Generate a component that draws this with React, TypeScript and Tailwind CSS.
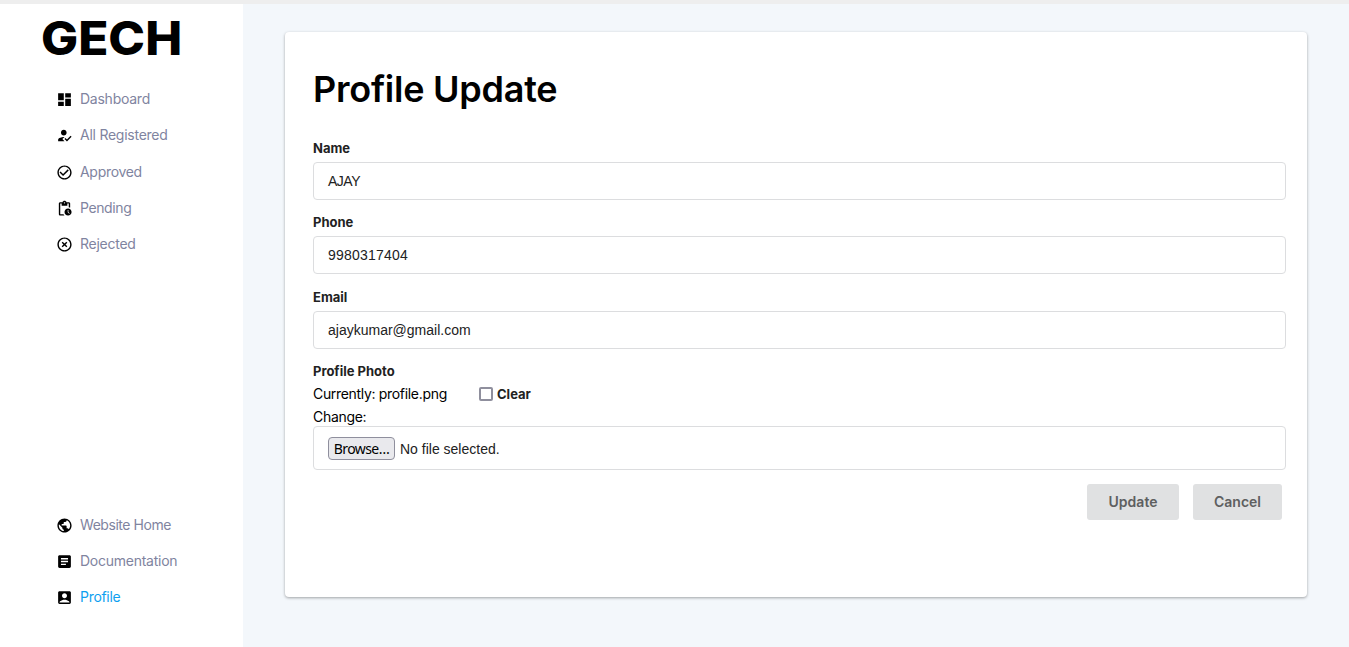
import React from "react";
import type { IconType } from "react-icons";
import {
  MdDashboard,
  MdHowToReg,
  MdCheckCircleOutline,
  MdPendingActions,
  MdHighlightOff,
  MdPublic,
  MdArticle,
  MdAccountBox,
} from "react-icons/md";

interface NavItem {
  label: string;
  icon: IconType;
  text: string;
}

const mainNav: NavItem[] = [
  { label: "Dashboard", icon: MdDashboard, text: "text-[#7f84a0] tracking-[-0.25px]" },
  { label: "All Registered", icon: MdHowToReg, text: "text-[#7f84a0] tracking-[-0.25px]" },
  { label: "Approved", icon: MdCheckCircleOutline, text: "text-[#7f84a0] tracking-[-0.3px]" },
  { label: "Pending", icon: MdPendingActions, text: "text-[#7f84a0] tracking-[-0.4px]" },
  { label: "Rejected", icon: MdHighlightOff, text: "text-[#7f84a0] tracking-[-0.25px]" },
];

const footNav: NavItem[] = [
  { label: "Website Home", icon: MdPublic, text: "text-[#7f84a0] tracking-[-0.45px]" },
  { label: "Documentation", icon: MdArticle, text: "text-[#7f84a0] tracking-[-0.25px]" },
  { label: "Profile", icon: MdAccountBox, text: "text-[#0d9ff0] tracking-[-0.3px]" },
];

function NavList({ items }: { items: NavItem[] }) {
  return (
    <ul className="flex flex-col pl-[56px]">
      {items.map(({ label, icon: Icon, text }) => (
        <li key={label} className="flex h-[36.25px] items-center gap-[7px]">
          <Icon className="mt-px size-[17px] shrink-0 text-black" />
          <a className={`text-[14px] leading-5 whitespace-nowrap ${text}`}>{label}</a>
        </li>
      ))}
    </ul>
  );
}

function Field({ label, value, tracking }: { label: string; value: string; tracking: string }) {
  return (
    <div className="flex h-[74.35px] flex-col">
      <label className="h-[23px] text-[13px] leading-[18px] font-bold text-[#222]">
        {label}
      </label>
      <div
        className={`flex h-[38px] shrink-0 items-center rounded-[4px] border border-[#dcdddf] px-[14px] font-['Liberation_Sans',sans-serif] text-[14px] text-[#222] ${tracking}`}
      >
        {value}
      </div>
    </div>
  );
}

export default function App() {
  return (
    <div className="flex h-[647px] w-full flex-col overflow-hidden border-t-4 border-[#eeeeee] bg-[#f3f7fb] font-['Inter',sans-serif]">
      <div className="flex flex-1">
        <aside className="flex w-[243px] shrink-0 flex-col bg-white pb-[31.5px]">
          <div className="h-[77px] pt-[9px] pl-[41px]">
            <div className="w-max origin-left scale-x-[1.075] text-[46px] leading-[50px] font-extrabold text-black">
              GECH
            </div>
          </div>
          <NavList items={mainNav} />
          <div className="flex-1" />
          <NavList items={footNav} />
        </aside>
        <main className="flex-1 pt-[28px] pr-[42px] pl-[42px]">
          <section className="h-[565px] rounded-[4px] bg-white pt-[28px] pr-[21px] pl-[28px] shadow-[0_1px_3px_rgba(0,0,0,0.35)]">
            <h1 className="h-[79px] text-[36px] leading-[58px] font-semibold tracking-[-0.25px] whitespace-nowrap text-black">
              Profile Update
            </h1>
            <Field label="Name" value="AJAY" tracking="tracking-[-0.5px]" />
            <Field label="Phone" value="9980317404" tracking="tracking-[0.2px]" />
            <Field label="Email" value="ajaykumar@gmail.com" tracking="tracking-[0px] pt-px" />
            <div className="text-[13px] leading-[18px] font-bold text-[#222]">Profile Photo</div>
            <div className="mt-[1.5px] flex h-[23px] items-center text-[14px] text-black">
              <span className="w-[166px] tracking-[-0.32px]">Currently: profile.png</span>
              <span className="mt-px size-[14px] rounded-[2px] border-2 border-[#8f8f9d] bg-white" />
              <span className="mt-[3px] ml-[4px] text-[13px] font-bold text-[#222]">Clear</span>
            </div>
            <div className="flex h-[21px] items-center pt-[2px] text-[14px] tracking-[-0.3px]">Change:</div>
            <div className="flex h-[44px] items-center rounded-[4px] border border-[#dcdddf] px-[14px] pt-[1.5px] font-['Liberation_Sans',sans-serif] text-[14px]">
              <button className="flex h-[23px] w-[67px] items-center justify-center rounded-[4px] border border-[#8f8f9d] bg-[#e9e9ed] font-['Noto_Sans',sans-serif] text-[14px] tracking-[-0.6px] text-black">
                Browse…
              </button>
              <span className="mt-[2px] ml-[5px] text-[#222]">No file selected.</span>
            </div>
            <div className="mt-[14px] flex justify-end gap-[14px] pr-[4px]">
              <button className="h-[36px] w-[92px] rounded-[3px] bg-[#e0e1e2] text-[14px] font-semibold tracking-[0.05px] text-[#5e5f60]">
                Update
              </button>
              <button className="h-[36px] w-[89px] rounded-[3px] bg-[#e0e1e2] text-[14px] font-semibold text-[#5e5f60]">
                Cancel
              </button>
            </div>
          </section>
        </main>
      </div>
    </div>
  );
}
